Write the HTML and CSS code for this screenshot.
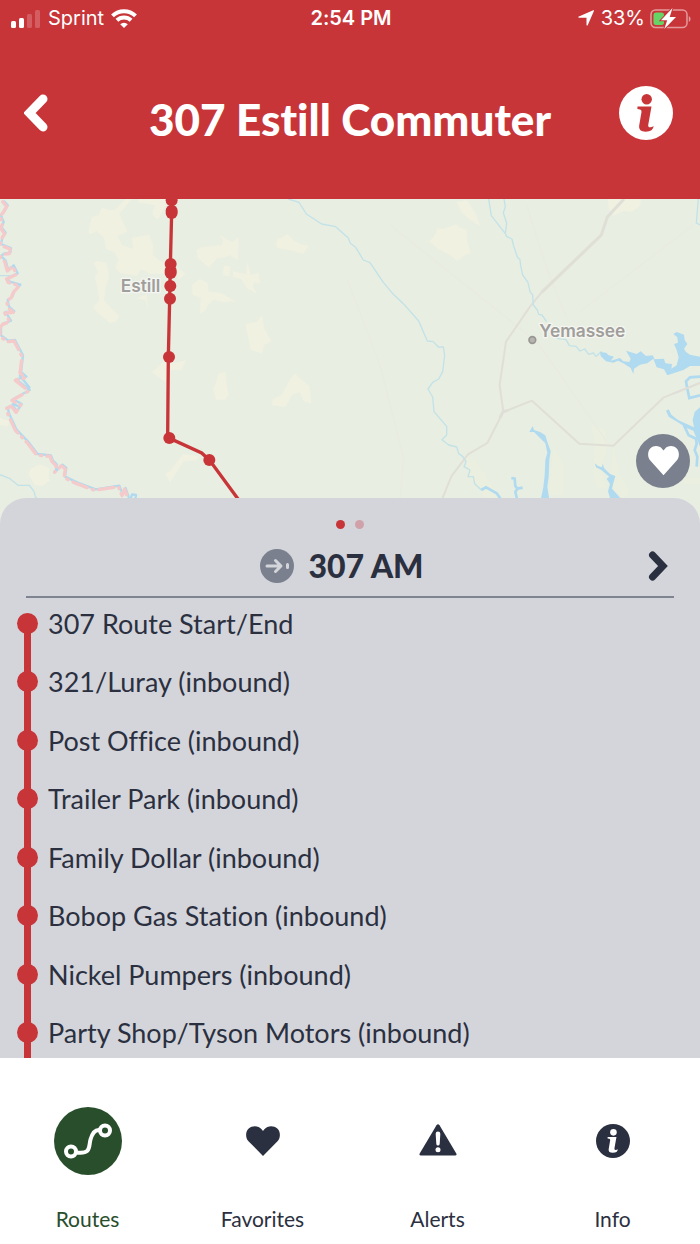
FILE: index.html
```
<!DOCTYPE html>
<html lang="en">
<head>
  <meta charset="UTF-8" />
  <meta name="viewport" content="width=device-width, initial-scale=1.0" />
  <title>307 Estill Commuter</title>
  <link rel="stylesheet" href="styles.css">
</head>
<body>
  <header class="header">
    <div class="status-bar">
      <div class="status-left">
        <svg class="signal" viewBox="0 0 30 19" aria-hidden="true">
          <rect x="0" y="12" width="5" height="7" rx="1.5" />
          <rect x="8" y="9" width="5" height="10" rx="1.5" />
          <rect class="dim" x="16" y="5" width="5" height="14" rx="1.5" />
          <rect class="dim" x="24" y="1" width="5" height="18" rx="1.5" />
        </svg>
        <span>Sprint</span>
        <svg class="wifi" viewBox="0 0 26 19" aria-hidden="true">
          <path d="M1.500 6.900a16.500 16.500 0 0 1 23 0" />
          <path d="M5.900 11.300a10.300 10.300 0 0 1 14.200 0" />
          <path class="wifi-dot" d="M13 19l-3.800-3.800a5.400 5.400 0 0 1 7.600 0z" />
        </svg>
      </div>
      <span class="time">2:54 PM</span>
      <div class="status-right">
        <svg class="location" viewBox="0 0 16 16" aria-hidden="true">
          <path d="M15.200.2c.6-.2.900.1.700.700L9.800 15c-.4.900-1.300.7-1.300-.3V7.700H1.200C0 7.700-.1 6.800.9 6.400z" />
        </svg>
        <span>33%</span>
        <svg class="battery" viewBox="0 0 41 21" aria-hidden="true">
          <rect class="battery-case" x="1" y="2" width="36" height="17.5" rx="4.5" />
          <path class="battery-tip" d="M38.800 8v6q1.800-.8 1.800-3T38.800 8z" />
          <rect class="battery-level" x="3.500" y="4.500" width="10.500" height="12.500" rx="2.500" />
          <path class="bolt" d="M22.500 0 11 12.300h6.200L14.300 21 26 9h-6.300z" />
        </svg>
      </div>
    </div>
    <div class="nav">
      <button class="icon-button back" aria-label="Back">
        <svg viewBox="0 0 24 38"><path d="M19 5 5.500 19 19 33" /></svg>
      </button>
      <h1>307 Estill Commuter</h1>
      <button class="icon-button route-info" aria-label="Route information">
        <svg viewBox="-27 -27 54 54">
          <circle r="27" />
          <g class="cutout">
            <circle cx="0.700" cy="-13.700" r="5.200" />
            <path d="M-8.500-6.500H5.500L2.300 11.500q-.5 3 1.800 2.800 2-.1 3.500-1.300-.2 5.700-8 5.700-7.200 0-6.500-5.700l2.400-14q.3-2.400-1.500-2.600l-2.600-.3z" />
          </g>
        </svg>
      </button>
    </div>
  </header>

  <main>
    <section class="map">
      <svg class="map-canvas" viewBox="0 12 2100 975" preserveAspectRatio="xMidYMin slice" role="img" aria-label="Route map">
        <!-- fields -->
        <g class="land">
          <path d="M266 106L276 66L296 60L306 38L330 46L346 44L376 12H396L358 56L382 110L352 122L366 150L400 162L396 128L446 120L460 150V180L474 194L494 206V236H450L424 222L410 242L360 234L346 218L356 196L344 172L318 162L312 128L290 108L270 118Z" />
          <path d="M281 204L290 198L318 204L326 230V250L316 280L312 316L334 340L358 362L348 380L330 384L290 350L280 336L298 316L292 276L284 246L294 230Z" />
          <path d="M415 12h80l2 20-24 42-16-16 8-28-50-8zM530 215l28 22-24 18z" />
          <path d="M590 165L600 158L666 150L670 134L656 116L680 134L696 140L716 128L714 196L690 180L668 188L650 190L628 218L594 190ZM672 212L690 214L688 244L668 240ZM698 228L738 238L742 200L752 240L776 234L780 266L762 262L758 276L774 298L740 278L724 252L700 246Z" />
          <path d="M576 270L600 252L622 264L626 290L664 294L704 318L670 322L642 314L624 330L616 346L600 356L602 308L578 300ZM736 388L772 380L786 360L792 400L814 438L792 450L786 476L752 464L744 422Z" />
          <path d="M828 150L832 134L864 118L878 134L898 146L926 152L910 176L882 168L832 158ZM640 584L650 556L656 536L676 530L680 570L686 600L676 614L648 614ZM814 630L820 612L846 600L870 554L884 536L900 550L928 574L934 626L912 618L898 590L876 600L856 636Z" />
          <path d="M456 532l34-32 34 4 34-8-14 28-34 2-14 36zM494 838L512 826L548 778L598 782L590 796L552 798L528 834L510 862L500 844ZM86 838L92 822L120 808L148 820L146 846L150 856L128 872L104 870ZM0 668L28 680L24 694L0 690Z" />
          <path d="M410 310l30-12 4 46-8-30z" />
        </g>
        <g class="land" transform="translate(1050 0)">
          <path d="M238 140L258 116L262 100L280 102L318 88L330 98L350 104L352 140L362 176L354 176L340 184L322 198L300 180L262 160ZM320 22L350 14L366 40L380 62L390 92L362 76L336 54ZM774 12H872V30L846 50L820 48L790 62L776 40Z" />
        </g>
        <path class="marsh" d="M1394 780L1430 800L1460 850L1504 910H1460L1410 850ZM1660 760L1690 800V900H1646ZM1774 692L1816 706L1820 760L1804 820L1820 880H1790L1780 820L1786 760ZM1840 750L1856 830L1890 890L1870 912L1830 870ZM2050 850h50v16h-50z" />

        <!-- roads -->
        <g class="road faint">
          <path d="M1170 90l440 350 120 170 90 130M1580 30l60 190 60 150M1040 250l100 260 70 280-10 130M2080 90L1740 350" />
        </g>
        <g class="road">
          <path class="wide" d="M1872 12L1822 66L1804 120L1624 293" />
          <path d="M1624 293L1590 335L1518 440L1499 570L1510 650L1462 744L1404 778L1354 844L1326 914" />
          <path d="M1510 651l86-34 142 129 102 6 150-144 110-44" />
          <path class="wide" d="M1500 668l9-18 15-4" />
        </g>

        <!-- rivers -->
        <g class="stream">
          <path d="M865 12L897 22L919 57L965 87L1007 95L1045 129L1051 145L1067 157L1090 195L1110 203L1150 262L1180 298L1210 326L1256 378L1282 438L1300 440L1315 456L1330 456L1334 480L1328 530L1316 552L1298 562L1284 582L1298 606L1302 650L1340 694V720L1326 734L1346 750L1370 756L1376 776L1388 784L1398 800L1392 815L1410 825L1404 845L1420 845L1424 866L1444 885" />
          <path d="M1466 12L1474 62L1516 116L1520 124L1536 132L1540 150L1552 186L1560 194L1562 212L1568 240L1584 262L1590 290L1598 300L1600 330L1612 345L1616 358L1626 360L1640 380" />
          <path d="M1512 12L1516 34L1510 54L1520 84L1516 116" />
          <path d="M1670 430l28 4 10 18 20 2 12 14 14-6 12 16 14-4 8 10 16-14 4 12" />
          <path d="M2095 12l-6 72 12 6M0 839l30 12 24 20h34l14 18 4 16 10 10M0 242h30" />
        </g>

        <!-- state border along the river -->
        <defs>
          <path id="border" d="M8 20L20 34L10 52L0 64L8 84L2 100L14 116L4 132L0 150L30 162L28 176L10 178L0 186L14 200L22 228L38 214L50 238L20 252L24 262L58 272L40 292L34 308L20 318L24 338L40 352L14 354L30 380L8 388L0 398V424L22 440L42 438L66 484L62 520L60 534L76 548L46 556L86 588L36 616L62 630L48 652L34 634L20 640L24 658L46 706L84 746L110 780L150 784L156 800L168 812L164 832L184 812L196 822L192 848L230 866L284 886L355 875L366 902L374 882L384 912" />
        </defs>
        <use class="border-water" href="#border" x="3" y="-3" />
        <path class="border-water" d="M58 540L90 580M36 626L56 634M392 912L396 898L408 900L406 912" />
        <use class="border" href="#border" />

        <!-- open water -->
        <g class="water" transform="translate(1770 375)">
          <path d="M30 96L48 98L56 106L72 110L62 122L90 114L100 124L118 126L122 116L108 92L140 102L152 94L168 108L188 106L194 118L222 116L226 130L246 132L244 146L260 136L266 112L260 90L252 72L264 68L262 52L250 42L260 36L282 44L284 60L292 72L282 86L288 96L300 104L330 110V138H300L280 150L232 166L222 148L200 142L190 116L172 130L150 134L132 146L130 162L122 144L100 130L84 122L70 128L48 124L32 108Z" />
          <path d="M228 272L236 268L244 284L264 300L290 312L312 322L308 300L314 276L330 262V380L318 350L310 332L290 324L266 308L236 290Z" />
          <path class="channel" d="M330 170L300 172L288 184L292 206L298 234L330 226M282 316L296 346L318 356L320 372L314 390L322 410L320 440" />
        </g>
        <g class="water" transform="translate(1380 645)">
          <path d="M218 48L222 60L240 66L256 76L262 96L272 124L268 150L266 200L262 230L268 270H242L250 232L254 196L256 150L262 128L256 100L240 84L222 66L208 66Z" />
          <path d="M404 160L414 168L426 172L428 160L432 174L450 192L466 198L460 220L456 236L486 270H452L444 244L450 222L440 206L448 200L424 180L408 172Z" />
          <path class="creek" d="M64 240L78 232L96 242L110 250L124 270M154 204L164 206L166 228L172 236L188 233M172 236L166 246L172 270" />
        </g>
        <path class="road" d="M2020 596l80-32" />

        <!-- place names -->
        <text class="place" x="362" y="291">Estill</text>
        <circle class="town" cx="1597" cy="435" r="10" />
        <text class="place" x="1618" y="426">Yemassee</text>

        <!-- route -->
        <path class="route" d="M516 12l-1 40-4 160-2 100-4 174-2 236 6 8 96 44 24 22 110 150" />
        <g class="stops">
          <circle cx="515" cy="16" r="18" />
          <circle cx="515" cy="47" r="18" />
          <circle cx="515" cy="54" r="18" />
          <circle cx="512" cy="207" r="18" />
          <circle cx="512" cy="227" r="18" />
          <circle cx="512" cy="234" r="18" />
          <circle cx="511" cy="273" r="18" />
          <circle cx="510" cy="311" r="18" />
          <circle cx="507" cy="486" r="18" />
          <circle cx="508" cy="729" r="18" />
          <circle cx="628" cy="795" r="18" />
        </g>
      </svg>
      <button class="favorite" aria-label="Add to favorites">
        <svg viewBox="0 0 34 32"><path d="M17 32 2.500 16C-.8 12.300-.6 5.800 2.700 2.500 6.500-1 12.500-.5 15.600 3.200L17 5l1.400-1.800C21.500-.5 27.500-1 31.300 2.500c3.300 3.300 3.500 9.800.2 13.500z" /></svg>
      </button>
    </section>

    <section class="sheet">
      <div class="pager">
        <span class="page active"></span>
        <span class="page"></span>
      </div>
      <div class="direction">
        <h2>
          <svg class="direction-icon" viewBox="0 0 34 34" aria-hidden="true">
            <circle cx="17" cy="17" r="17" />
            <path d="M7 17h13M15.500 11.500 21 17l-5.500 5.500M27.500 15.500v3" />
          </svg>
          307 AM
        </h2>
        <button class="icon-button next" aria-label="Next direction">
          <svg viewBox="0 0 20 30"><path d="M4.500 4 15 15 4.500 26" /></svg>
        </button>
      </div>
      <ul class="stop-list">
        <li>307 Route Start/End</li>
        <li>321/Luray (inbound)</li>
        <li>Post Office (inbound)</li>
        <li>Trailer Park (inbound)</li>
        <li>Family Dollar (inbound)</li>
        <li>Bobop Gas Station (inbound)</li>
        <li>Nickel Pumpers (inbound)</li>
        <li>Party Shop/Tyson Motors (inbound)</li>
      </ul>
    </section>
  </main>

  <nav class="tabs">
    <a class="tab active" href="#routes">
      <span class="tab-icon">
        <svg viewBox="-34 -34 68 68">
          <path class="route-line" d="M-11.500 11.500c15 2 12-6 14-13 2-7 5-10 9-9.500" />
          <circle class="route-line" cx="-17" cy="10.500" r="5" />
          <circle class="route-line" cx="17" cy="-10.500" r="5" />
        </svg>
      </span>
      <span>Routes</span>
    </a>
    <a class="tab" href="#favorites">
      <span class="tab-icon">
        <svg class="heart" viewBox="0 0 34 30"><path d="M17 30 2.500 15.200C-.8 11.700-.6 5.500 2.700 2.500 6.500-1 12.500-.5 15.600 3.200L17 5l1.400-1.800C21.500-.5 27.500-1 31.300 2.500c3.300 3 3.500 9.200.2 12.700z" /></svg>
      </span>
      <span>Favorites</span>
    </a>
    <a class="tab" href="#alerts">
      <span class="tab-icon">
        <svg class="alert" viewBox="0 0 38 34">
          <path d="M17.500 1.300q1.500-2 3 0l16.800 28.200q.9 2-1.300 2H2q-2.200 0-1.300-2z" />
          <path class="cutout" d="M19 7.500q2.400 0 2.300 2.200l-.6 10.300q-.2 1.600-1.700 1.600t-1.700-1.600l-.6-10.300q-.1-2.200 2.300-2.200z" />
          <circle class="cutout" cx="19" cy="25.700" r="2.500" />
        </svg>
      </span>
      <span>Alerts</span>
    </a>
    <a class="tab" href="#info">
      <span class="tab-icon">
        <svg class="info" viewBox="-27 -27 54 54">
          <circle r="27" />
          <g class="cutout">
            <circle cx="0.700" cy="-13.700" r="5.200" />
            <path d="M-8.500-6.500H5.500L2.300 11.500q-.5 3 1.800 2.800 2-.1 3.500-1.300-.2 5.700-8 5.700-7.200 0-6.500-5.700l2.400-14q.3-2.400-1.500-2.600l-2.600-.3z" />
          </g>
        </svg>
      </span>
      <span>Info</span>
    </a>
  </nav>
</body>
</html>
```
FILE: styles.css
```
* {
  box-sizing: border-box;
}

body {
  display: flex;
  flex-direction: column;
  height: 100vh;
  margin: 0;
  font-family: Lato, "Open Sans", sans-serif;
  font-variant-ligatures: none;
  color: #2b3040;
  background: #fff;
}

svg {
  display: block;
}

button {
  padding: 0;
  border: none;
  background: none;
  cursor: pointer;
}

/* header */
.header {
  flex: none;
  color: #fff;
  background: #c83539;
}

.status-bar {
  display: grid;
  grid-template-columns: 1fr auto 1fr;
  align-items: center;
  height: 36px;
  padding: 0 9px 0 11px;
  font-family: Inter, sans-serif;
  font-size: 20px;
}

.status-left,
.status-right {
  display: flex;
  align-items: center;
  gap: 7px;
}

.status-right {
  gap: 5px;
  justify-content: flex-end;
}

.status-bar svg {
  fill: #fff;
}

.signal {
  width: 30px;
}

.signal .dim {
  opacity: 0.2;
}

.wifi {
  width: 26px;
}

.status-bar .wifi path {
  fill: none;
  stroke: #fff;
  stroke-width: 4;
}

.status-bar .wifi .wifi-dot {
  fill: #fff;
  stroke: none;
}

.time {
  font-weight: 600;
}

.location {
  width: 16px;
  margin-right: 2px;
}

.battery {
  width: 41px;
}

.status-bar .battery-case {
  fill: none;
  stroke: #e39a9c;
  stroke-width: 1.5;
}

.status-bar .battery-tip {
  fill: #e39a9c;
}

.status-bar .battery-level {
  fill: #66d366;
}

.bolt {
  stroke: #c83539;
  stroke-width: 2;
  paint-order: stroke;
}

.nav {
  display: grid;
  grid-template-columns: 54px 1fr 54px;
  align-items: start;
  padding: 50px 27px 55px 9px;
}

.nav h1 {
  margin: 0;
  padding: 8px 0 0;
  font-size: 44px;
  font-weight: 900;
  line-height: 50px;
  text-align: center;
  padding-left: 18px;
}

.icon-button {
  display: grid;
  place-items: center;
  height: 54px;
}

.icon-button path {
  fill: none;
  stroke: currentColor;
  stroke-width: 9;
}

.back {
  color: #fff;
}

.back svg {
  width: 24px;
  stroke-linecap: round;
}

.route-info svg {
  width: 54px;
  fill: #fff;
}

.route-info .cutout,
.route-info .cutout path {
  fill: #c83539;
  stroke: none;
}

/* map */
main {
  display: flex;
  flex: 1;
  flex-direction: column;
  min-height: 0;
}

.map {
  position: relative;
  flex: none;
  background: #e8eee1;
}

.map-canvas {
  width: 100%;
}

.land {
  fill: #f1f1e2;
}

.marsh {
  fill: #ebefdf;
}

.road {
  fill: none;
  stroke: #e0dfd7;
  stroke-width: 6;
  stroke-linejoin: round;
}

.road .wide {
  stroke-width: 9;
}

.faint {
  stroke: #e9ebe1;
  stroke-width: 4;
}

.stream {
  fill: none;
  stroke: #c3e2e8;
  stroke-width: 4;
  stroke-linejoin: round;
}

.water {
  fill: #b0daf0;
}

.channel,
.creek {
  fill: none;
  stroke: #b0daf0;
  stroke-width: 8;
}

.border-water {
  fill: none;
  stroke: #b0daf0;
  stroke-width: 7;
  stroke-linejoin: round;
}

.border {
  fill: none;
  stroke: #f5caca;
  stroke-width: 10;
  stroke-dasharray: 46 16 4 16;
  stroke-linecap: round;
  stroke-linejoin: round;
}

.place {
  fill: #a09e9b;
  stroke: #f5f6f1;
  stroke-width: 8;
  stroke-linejoin: round;
  paint-order: stroke;
  font-family: Inter, sans-serif;
  font-size: 52px;
  font-weight: 600;
}

.town {
  fill: #b6b5b0;
  stroke: #989793;
  stroke-width: 5;
}

.route {
  fill: none;
  stroke: #c83539;
  stroke-width: 10;
}

.stops {
  fill: #c83539;
}

.favorite {
  position: absolute;
  right: 10px;
  bottom: 36px;
  display: grid;
  place-items: center;
  width: 54px;
  height: 54px;
  border-radius: 50%;
  background: #7a808d;
}

.favorite svg {
  width: 31px;
  fill: #fff;
}

/* bottom sheet */
.sheet {
  position: relative;
  display: flex;
  flex: 1;
  flex-direction: column;
  min-height: 0;
  margin-top: -26px;
  padding-top: 22px;
  border-radius: 26px 26px 0 0;
  background: #d4d5db;
  overflow: hidden;
}

.pager {
  display: flex;
  justify-content: center;
  gap: 10px;
}

.page {
  width: 9px;
  height: 9px;
  border-radius: 50%;
  background: #d0a1a9;
}

.page.active {
  background: #c83539;
}

.direction {
  display: grid;
  grid-template-columns: 24px 1fr 24px;
  align-items: center;
  height: 69px;
  margin: 0 26px;
  padding: 6px 4px 0 0;
  border-bottom: 2px solid #7e8591;
}

.direction h2 {
  display: flex;
  grid-column: 2;
  align-items: center;
  justify-content: center;
  gap: 14px;
  margin: 0;
  padding-right: 12px;
  font-size: 32px;
  font-weight: 900;
}

.direction-icon {
  width: 34px;
  fill: #7a808d;
}

.direction-icon path {
  fill: none;
  stroke: #d4d5db;
  stroke-width: 3;
  stroke-linecap: round;
  stroke-linejoin: round;
}

.next {
  color: #2b3040;
}

.next svg {
  width: 20px;
}

.next path {
  stroke-width: 7;
  stroke-linecap: round;
}

.stop-list {
  display: grid;
  flex: 1;
  grid-auto-rows: minmax(56px, 1fr);
  margin: -4px 0;
  padding: 0;
  list-style: none;
  font-size: 27px;
}

.stop-list li {
  position: relative;
  display: flex;
  align-items: center;
  gap: 10px;
  padding-left: 17px;
}

.stop-list li::before {
  content: "";
  width: 21px;
  height: 21px;
  border-radius: 50%;
  background: #c83539;
}

/* line that joins the stops */
.stop-list li::after {
  content: "";
  position: absolute;
  top: 0;
  bottom: 0;
  left: 24px;
  width: 7px;
  background: #c83539;
}

.stop-list li:first-child::after {
  top: 50%;
}

/* tab bar */
.tabs {
  display: grid;
  flex: none;
  grid-template-columns: repeat(4, 1fr);
  padding: 49px 0 12px;
  background: #fff;
}

.tab {
  display: flex;
  flex-direction: column;
  align-items: center;
  gap: 31px;
  color: #2b3040;
  font-size: 21px;
  line-height: 26px;
  text-decoration: none;
}

.tab.active {
  color: #284e2c;
}

.tab-icon {
  display: grid;
  place-items: center;
  width: 68px;
  height: 68px;
  border-radius: 50%;
  fill: #2b3040;
}

.active .tab-icon {
  background: #284e2c;
}

.route-line {
  fill: none;
  stroke: #fff;
  stroke-width: 4;
}

.heart,
.info {
  width: 34px;
}

.alert {
  width: 38px;
}

.tab .cutout {
  fill: #fff;
}
```
